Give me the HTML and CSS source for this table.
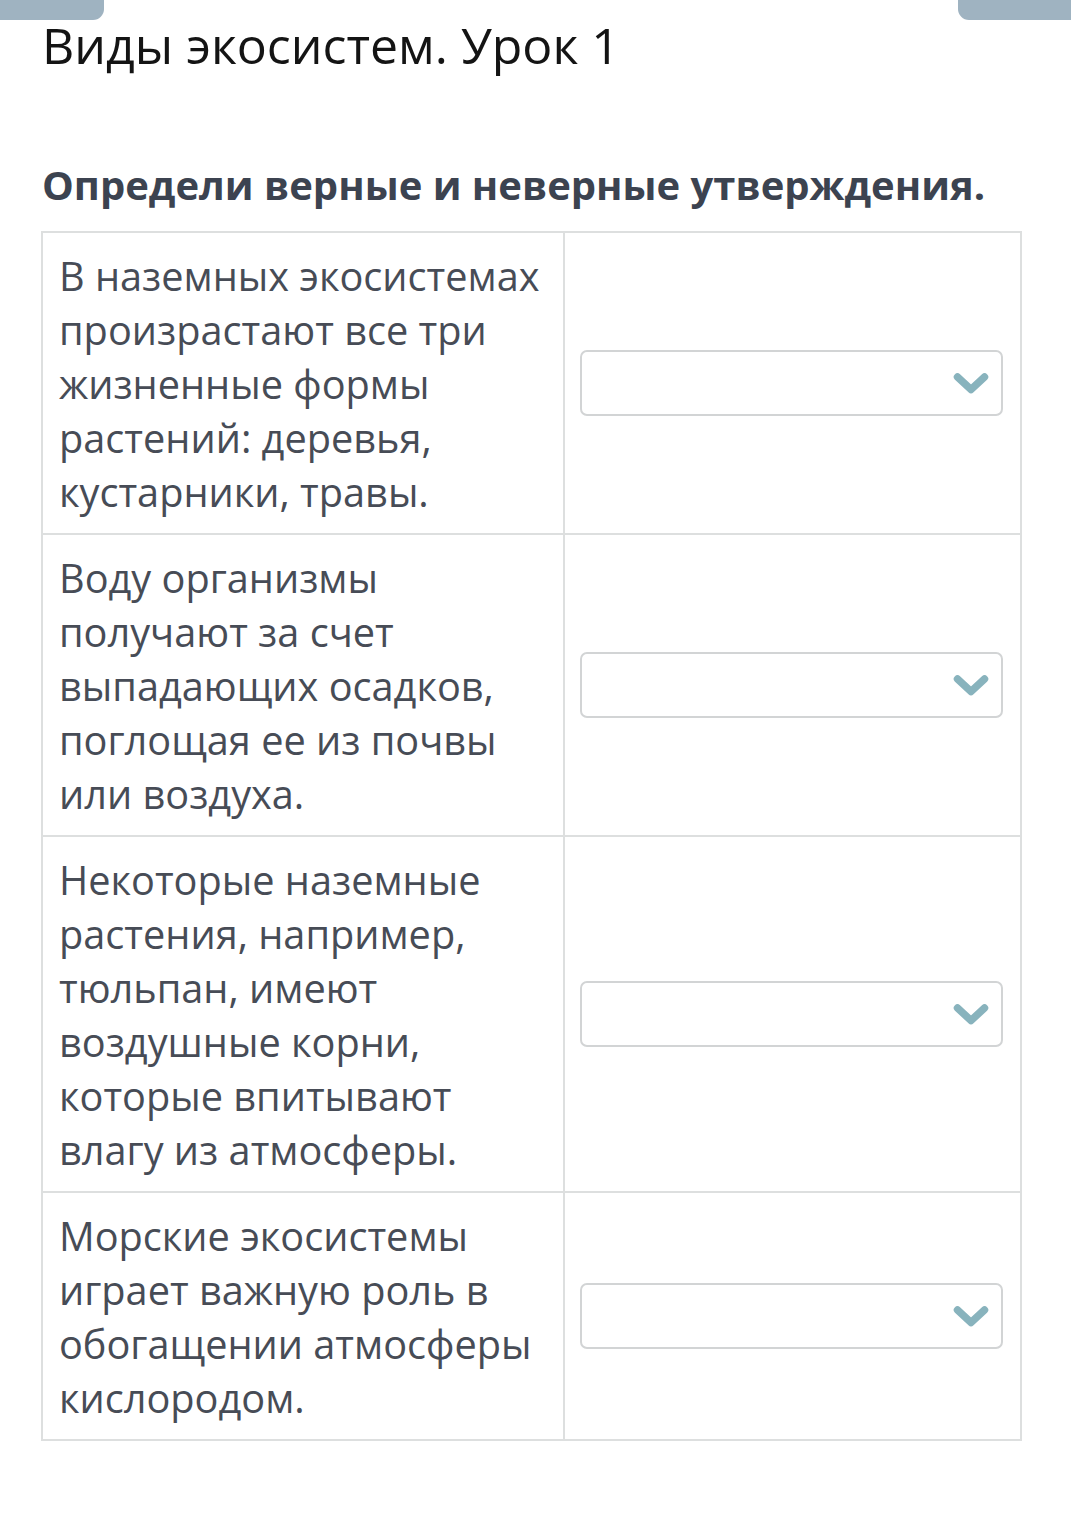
FILE: index.html
```html
<!DOCTYPE html>
<html lang="ru">
<head>
<meta charset="utf-8">
<link rel="stylesheet" href="styles.css">
</head>
<body>
<div class="topbar">
  <div class="tab tab-left"></div>
  <div class="tab tab-right"></div>
</div>
<main class="page">
  <h1 class="title">Виды экосистем. Урок 1</h1>
  <h2 class="task">Определи верные и неверные утверждения.</h2>
  <div class="table">
    <div class="row">
      <div class="cell text">В наземных экосистемах произрастают все три жизненные формы растений: деревья, кустарники, травы.</div>
      <div class="cell answer"><div class="select"><svg class="chev" viewBox="0 0 36 24"><path d="M4.5 5 L18 17.5 L31.5 5" fill="none" stroke="#88b3bd" stroke-width="7.5" stroke-linecap="round" stroke-linejoin="round"/></svg></div></div>
    </div>
    <div class="row">
      <div class="cell text">Воду организмы получают за счет выпадающих осадков, поглощая ее из почвы или воздуха.</div>
      <div class="cell answer"><div class="select"><svg class="chev" viewBox="0 0 36 24"><path d="M4.5 5 L18 17.5 L31.5 5" fill="none" stroke="#88b3bd" stroke-width="7.5" stroke-linecap="round" stroke-linejoin="round"/></svg></div></div>
    </div>
    <div class="row">
      <div class="cell text">Некоторые наземные растения, например, тюльпан, имеют воздушные корни, которые впитывают влагу из атмосферы.</div>
      <div class="cell answer"><div class="select"><svg class="chev" viewBox="0 0 36 24"><path d="M4.5 5 L18 17.5 L31.5 5" fill="none" stroke="#88b3bd" stroke-width="7.5" stroke-linecap="round" stroke-linejoin="round"/></svg></div></div>
    </div>
    <div class="row">
      <div class="cell text">Морские экосистемы играет важную роль в обогащении атмосферы кислородом.</div>
      <div class="cell answer"><div class="select"><svg class="chev" viewBox="0 0 36 24"><path d="M4.5 5 L18 17.5 L31.5 5" fill="none" stroke="#88b3bd" stroke-width="7.5" stroke-linecap="round" stroke-linejoin="round"/></svg></div></div>
    </div>
  </div>
</main>
</body>
</html>
```

FILE: styles.css
```css
html, body {
  margin: 0;
  padding: 0;
  background: #fff;
  font-family: "Open Sans", "Liberation Sans", sans-serif;
}
.topbar {
  display: flex;
  justify-content: space-between;
  height: 20px;
}
.tab {
  height: 20px;
  background: #9fb3c1;
}
.tab-left {
  width: 104px;
  border-bottom-right-radius: 11px;
}
.tab-right {
  width: 113px;
  border-bottom-left-radius: 11px;
}
.page {
  padding: 0 49px 0 41px;
}
.title {
  margin: 0;
  font-weight: 400;
  font-size: 50px;
  line-height: 50px;
  color: #141414;
  padding-left: 1px;
}
.task {
  margin: 0;
  padding-top: 91px;
  padding-left: 1px;
  font-weight: 700;
  font-size: 40px;
  line-height: 48px;
  color: #3c4350;
  white-space: nowrap;
}
.table {
  margin-top: 22px;
  border: 2px solid #dddfdf;
}
.row {
  display: grid;
  grid-template-columns: 522px 1fr;
}
.row + .row {
  border-top: 2px solid #dddfdf;
}
.cell {
  padding: 16px 16px 14px 16px;
}
.text {
  font-size: 39.7px;
  line-height: 54px;
  color: #474c56;
  border-right: 2px solid #dddfdf;
}
.answer {
  display: flex;
  align-items: center;
  padding: 0 17px 0 15px;
}
.select {
  flex: 1;
  height: 62px;
  border: 2px solid #d2d4d5;
  border-radius: 7px;
  display: flex;
  align-items: center;
  justify-content: flex-end;
  padding-right: 12px;
}
.chev {
  width: 36px;
  height: 24px;
  margin-top: 2px;
}
```
